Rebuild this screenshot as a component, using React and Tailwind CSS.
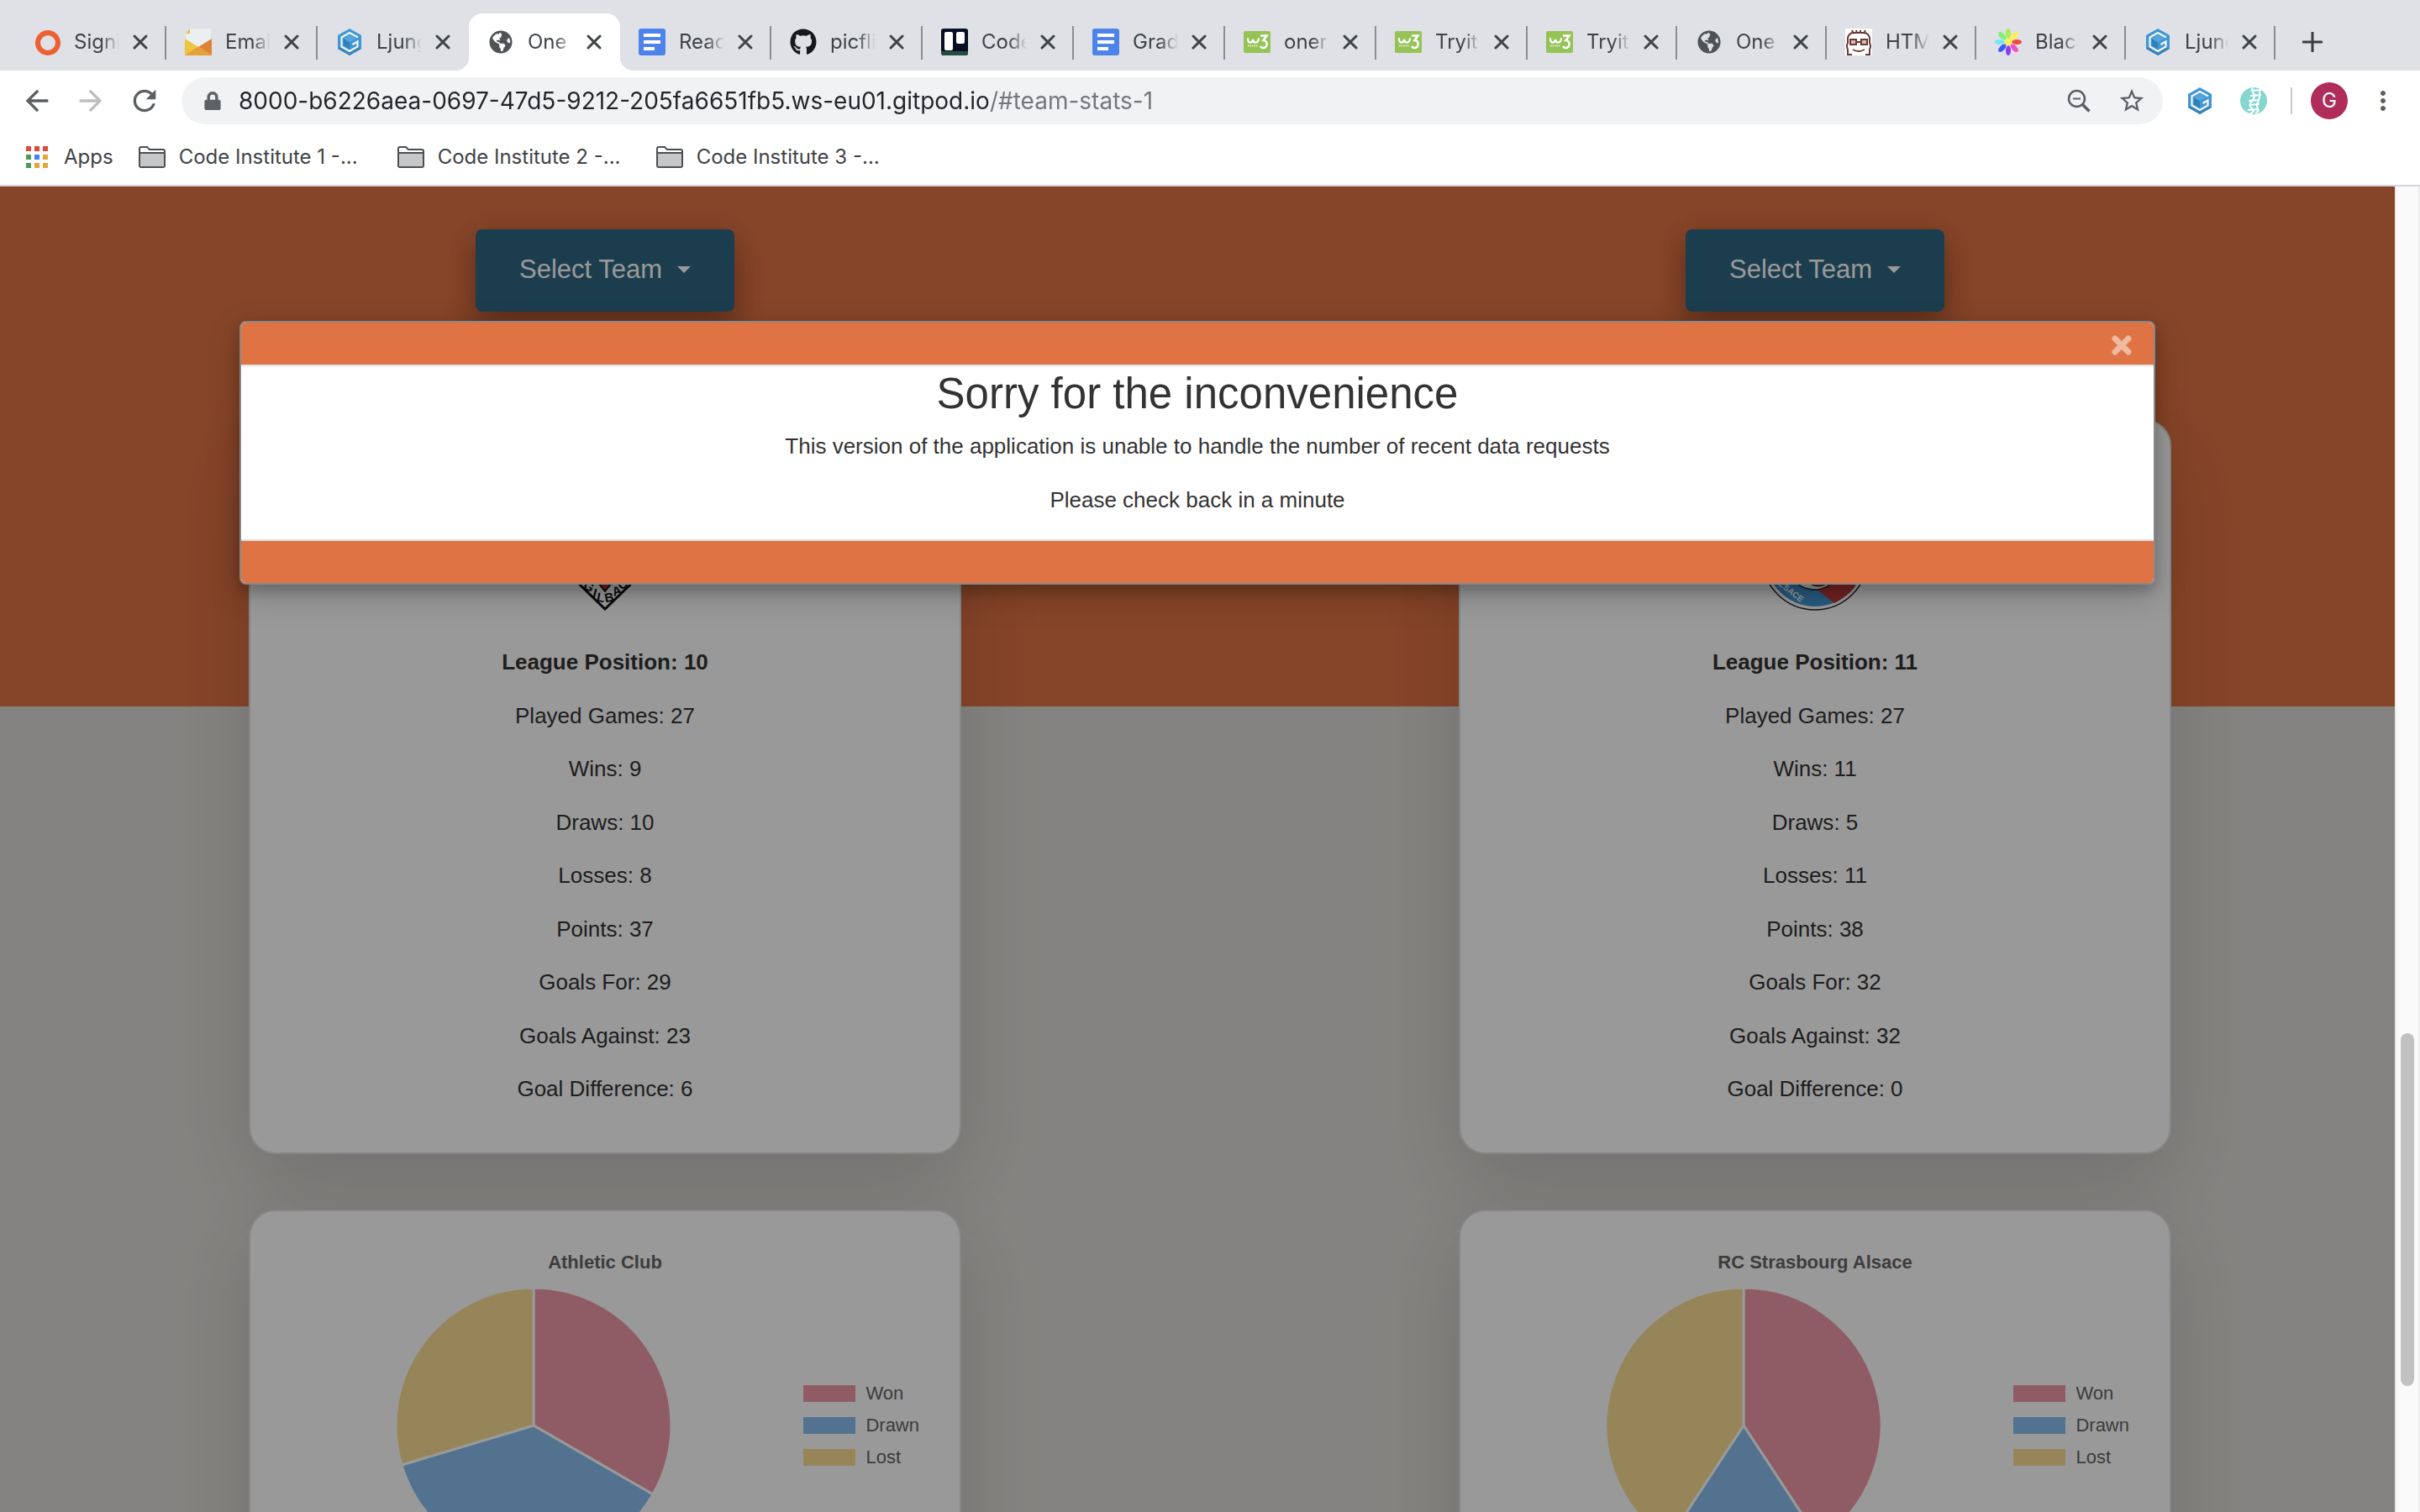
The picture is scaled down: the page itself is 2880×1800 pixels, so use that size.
import React from "react";
import { FaGithub, FaLock, FaGlobeAmericas } from "react-icons/fa";
import { MdArrowBack, MdArrowForward, MdRefresh, MdStarBorder, MdMoreVert } from "react-icons/md";

const UI = "font-['Inter',sans-serif]";
const BODY = "font-['Liberation_Sans',Arial,sans-serif]";

function RingIcon() {
  return (
    <svg viewBox="0 0 32 32" className="size-8">
      <circle cx="17" cy="17" r="12" fill="none" stroke="#ee5f33" strokeWidth="6" />
    </svg>
  );
}

function MailIcon() {
  return (
    <svg viewBox="0 0 32 32" className="size-8">
      <path d="M1 6l6-6h24v30H1z" fill="#ebeff0" />
      <path d="M1 6l5-6v6z" fill="#e8c13a" />
      <path d="M0 12l16 10L0 32z" fill="#ecc63f" />
      <path d="M32 12v20L16 22z" fill="#dd8434" />
      <path d="M0 32l16-11 16 11z" fill="#e8a03c" />
    </svg>
  );
}

function GitpodIcon() {
  return (
    <svg viewBox="0 0 32 32" className="size-8">
      <path d="M16 0l14 8v16l-14 8-14-8V8z" fill="#3f97d3" />
      <path d="M2 24l14 8 14-8-4-3-10 6-10-6z" fill="#3584ba" />
      <path d="M26 10.500L16 5 6.500 10.500v11L16 27l9.500-5.500v-6L19.500 19" fill="none" stroke="#f3f5f8" strokeWidth="2.200" />
      <path d="M16 7.500l8 4-8 4.500-7-4z" fill="#52a7e0" />
      <path d="M9 12.500l7 4v8l-7-4.500z" fill="#3380b5" />
    </svg>
  );
}

function GlobeIcon() {
  return <FaGlobeAmericas className="size-7 mx-0.5 text-[#4f5257]" />;
}

function DocIcon() {
  return (
    <svg viewBox="0 0 32 32" className="size-8">
      <rect width="32" height="32" rx="3" fill="#4f83ec" />
      <path d="M6 6h20v4H6zM6 14h20v4H6zM6 22h13v4H6z" fill="#fff" />
    </svg>
  );
}

function GithubIcon() {
  return <FaGithub className="size-8 text-[#17181c]" />;
}

function BoardIcon() {
  return (
    <svg viewBox="0 0 32 32" className="size-8">
      <rect width="32" height="32" rx="3" fill="#060f24" />
      <path d="M0 27h32v2a3 3 0 0 1-3 3H3a3 3 0 0 1-3-3z" fill="#274c40" />
      <rect x="4" y="4" width="10" height="22" rx="2" fill="#fff" />
      <rect x="18" y="4" width="10" height="14" rx="2" fill="#fff" />
    </svg>
  );
}

function SchoolIcon() {
  return (
    <svg viewBox="0 0 32 32" className="size-8">
      <rect y="3" width="32" height="26" rx="2" fill="#95c356" />
      <path d="M5 12c0 6 5 6 6 1 1 5 6 5 7-1" fill="none" stroke="#fff" strokeWidth="2.200" strokeLinecap="round" />
      <path d="M20 8.500h7.500l-4 5.500c6 0 5 9 0 9-2 0-3-1-3.500-2" fill="none" stroke="#fff" strokeWidth="2.500" />
      <path d="M5 20.500h12" stroke="#e2f0cd" strokeWidth="2" strokeDasharray="1.500 1" />
    </svg>
  );
}

function FaceIcon() {
  return (
    <svg viewBox="0 0 32 32" className="size-8">
      <rect width="32" height="32" fill="#fff" />
      <path d="M8 31H3V25q-2-4 0-8V11q1-5 6-6h14q5 1 6 6v6q2 4 0 8v6h-5" fill="none" stroke="#6b3a35" strokeWidth="2" />
      <path d="M8 2l2 4M13 2l1 4M18 2v4M24 2l-2 4" stroke="#6b3a35" strokeWidth="2" />
      <path d="M6 13h7v6H6zM19 13h7v6h-7z" fill="#d9bcb8" stroke="#6b3a35" strokeWidth="2" />
      <path d="M13 16h6" stroke="#6b3a35" strokeWidth="2" />
      <path d="M9 25q7 4 14 0" fill="none" stroke="#6b3a35" strokeWidth="2" />
    </svg>
  );
}

const PETALS = ["#a8f04a", "#fdf04f", "#ef4a3a", "#f04fc4", "#8a3df0", "#3a5bf5", "#6fe8fa", "#7ff07a"];

function FlowerIcon() {
  return (
    <svg viewBox="0 0 32 32" className="size-8">
      {PETALS.map((c, i) => (
        <path key={c} d="M16 0c2 0 3 3 3 6s-1 5-3 6c-2-1-3-3-3-6s1-6 3-6z" fill={c} transform={`rotate(${i * 45} 16 16)`} />
      ))}
      <circle cx="16" cy="16" r="4" fill="#fdf04f" />
    </svg>
  );
}

function DnaIcon() {
  return (
    <svg viewBox="0 0 32 32" className="size-8">
      <circle cx="16" cy="16" r="16" fill="#86d6d0" />
      <path d="M15 0q-2 4 1 7t-2 9 0 9-3 7M24 2q-1 4-1 8t-2 8 0 7-3 6" fill="none" stroke="#fff" strokeWidth="2" />
      <path d="M13 4l12-1M12 10l13-1M10 16l13-1M11 21l12-1M9 27l13-1" fill="none" stroke="#fff" strokeWidth="2" />
    </svg>
  );
}

function FolderIcon() {
  return (
    <svg viewBox="0 0 32 26" className="w-8 h-[26px] shrink-0">
      <path d="M1 23V3a2 2 0 0 1 2-2h7l3 3h16a2 2 0 0 1 2 2v17a2 2 0 0 1-2 2H3a2 2 0 0 1-2-2z" fill="#fff" stroke="#4c4f52" strokeWidth="2" />
      <path d="M2 8h28v16H2z" fill="#c6c7c8" />
      <path d="M1 8h30" stroke="#4c4f52" strokeWidth="2" />
    </svg>
  );
}

function AppsIcon() {
  const c = ["#df4a3e", "#df4a3e", "#df4a3e", "#4e9a5c", "#3f82f0", "#e3a63c", "#4e9a5c", "#e3a63c", "#e3a63c"];
  return (
    <svg viewBox="0 0 26 26" className="size-[26px] shrink-0">
      {c.map((f, i) => (
        <rect key={i} x={(i % 3) * 10} y={Math.floor(i / 3) * 10} width="6" height="6" fill={f} />
      ))}
    </svg>
  );
}

function ZoomOutIcon() {
  return (
    <svg viewBox="0 0 28 28" className="size-7" fill="none" stroke="currentColor" strokeWidth="2.500">
      <circle cx="11.500" cy="11.500" r="9.500" />
      <path d="M7 11.500h9" strokeWidth="2" />
      <path d="M18 18l8.500 8.500" strokeWidth="3.500" />
    </svg>
  );
}

const TABS = [
  ["Signi", RingIcon],
  ["Emai", MailIcon],
  ["Ljung", GitpodIcon],
  ["One", GlobeIcon, true],
  ["Reac", DocIcon],
  ["picfli", GithubIcon],
  ["Code", BoardIcon],
  ["Grad", DocIcon],
  ["oner", SchoolIcon],
  ["Tryit", SchoolIcon],
  ["Tryit", SchoolIcon],
  ["One", GlobeIcon],
  ["HTM", FaceIcon],
  ["Blacl", FlowerIcon],
  ["Ljung", GitpodIcon],
];

function Tab({ label, Icon, active, narrow, divider }) {
  return (
    <div
      className={`relative flex h-[68px] items-center px-[22px] ${narrow ? "w-[178px]" : "w-[180px]"} ${
        active ? "rounded-t-2xl bg-white" : ""
      }`}
    >
      {active && (
        <>
          <span className="absolute bottom-0 -left-4 size-4 bg-[radial-gradient(circle_at_0_0,transparent_16px,#fff_16px)]" />
          <span className="absolute bottom-0 -right-4 size-4 bg-[radial-gradient(circle_at_100%_0,transparent_16px,#fff_16px)]" />
        </>
      )}
      <button type="button" className="flex items-center gap-4 min-w-0 flex-1 text-left">
        <span className="shrink-0">
          <Icon />
        </span>
        <span className="flex-1 overflow-hidden whitespace-nowrap text-2xl text-[#3f4246] [mask-image:linear-gradient(90deg,#000_60%,transparent)]">
          {label}
        </span>
      </button>
      <button type="button" aria-label="Close tab" className="ml-4 text-[#3f4246]">
        <svg viewBox="0 0 18 18" className="size-[18px]">
          <path d="M2 2l14 14M16 2L2 16" stroke="currentColor" strokeWidth="3" strokeLinecap="round" />
        </svg>
      </button>
      {divider && <span className="absolute right-0 top-[15px] h-10 w-0.5 bg-[#8b8d92]" />}
    </div>
  );
}

function Browser() {
  return (
    <header className={UI}>
      <div className="flex items-end h-[84px] bg-[#dfe1e6] pl-[18px]">
        {TABS.map(([label, Icon, active], i) => (
          <Tab key={i} label={label} Icon={Icon} active={active} narrow={i > 9} divider={i !== 2 && i !== 3} />
        ))}
        <button type="button" aria-label="New tab" className="flex h-[68px] items-center ml-8 text-[#3a3d41]">
          <svg viewBox="0 0 24 24" className="size-6">
            <path d="M12 1v22M1 12h22" stroke="currentColor" strokeWidth="3" strokeLinecap="round" />
          </svg>
        </button>
      </div>

      <div className="flex items-center h-[72px] bg-white pl-6 pr-[26px]">
        <button type="button" aria-label="Back" className="text-[#5b5f64]"><MdArrowBack className="size-10" /></button>
        <button type="button" aria-label="Forward" className="ml-6 text-[#bcbec0]"><MdArrowForward className="size-10" /></button>
        <button type="button" aria-label="Reload" className="ml-6 text-[#5b5f64]"><MdRefresh className="size-10" /></button>
        <div className="flex flex-1 items-center h-14 ml-6 pl-[26px] pr-5 rounded-full bg-[#f1f2f4]">
          <FaLock className="size-[22px] shrink-0 text-[#5f6265]" />
          <input
            type="text"
            aria-label="Address"
            defaultValue="8000-b6226aea-0697-47d5-9212-205fa6651fb5.ws-eu01.gitpod.io/#team-stats-1"
            className="flex-1 ml-5 h-12 text-[28px] text-transparent bg-clip-text bg-[linear-gradient(90deg,#222427_892px,#72757a_892px)] outline-none"
          />
          <button type="button" aria-label="Zoom" className="text-[#5b5f64]"><ZoomOutIcon /></button>
          <button type="button" aria-label="Bookmark" className="ml-8 text-[#5b5f64]"><MdStarBorder className="size-[34px]" /></button>
        </div>
        <button type="button" aria-label="Gitpod" className="ml-7"><GitpodIcon /></button>
        <button type="button" aria-label="Extension" className="ml-8"><DnaIcon /></button>
        <span className="ml-7 h-8 w-0.5 bg-[#c9cbce]" />
        <button type="button" className="ml-[22px] size-11 rounded-full bg-[#b02c5a] text-2xl text-white">G</button>
        <button type="button" aria-label="Menu" className="ml-6 text-[#5b5f64]"><MdMoreVert className="size-9" /></button>
      </div>

      <nav className="flex items-center h-[66px] bg-white border-b-2 border-[#d3d6dc] pl-[31px] pb-0.5 text-2xl text-[#3f4246]">
        <a href="#apps" className="flex items-center gap-[19px]"><AppsIcon />Apps</a>
        {[1, 2, 3].map((n) => (
          <a key={n} href={`#folder-${n}`} className="flex items-center gap-4 ml-[30px] w-[278px] whitespace-nowrap">
            <FolderIcon />
            Code Institute {n} -...
          </a>
        ))}
      </nav>
    </header>
  );
}

const CREST_LETTERS = [
  ["G", 37, 99, 30],
  ["I", 44, 107, 14],
  ["L", 51, 112, 10],
  ["B", 61, 112, -10],
  ["A", 70, 104, -18],
  ["O", 77, 96, -30],
];

function AthleticCrest() {
  return (
    <svg viewBox="0 0 112 128" className="h-32 w-28">
      <path d="M4 2h104v40q0 24-22 55L56 126 26 97Q4 66 4 42z" fill="#fff" stroke="#111" strokeWidth="3" />
      <path d="M56 105L44 90V20h24v70z" fill="#c22d2d" stroke="#111" strokeWidth="2" />
      {CREST_LETTERS.map(([c, x, y, r]) => (
        <text
          key={c}
          x={x}
          y={y}
          transform={`rotate(${r} ${x} ${y})`}
          textAnchor="middle"
          dominantBaseline="central"
          fontSize="15"
          fontWeight="700"
          fill="#111"
        >
          {c}
        </text>
      ))}
    </svg>
  );
}

function StrasbourgCrest() {
  return (
    <svg viewBox="0 0 128 128" className="size-32">
      <circle cx="64" cy="64" r="63" fill="#fff" stroke="#222" strokeWidth="1.500" />
      <circle cx="64" cy="64" r="59" fill="#4197d6" />
      <path d="M60 98l27 21q16-8 25-20L98 84z" fill="#c23a3a" />
      <path d="M38 88q6 15 28 15 16-2 20-13z" fill="#fff" stroke="#222" strokeWidth="1.500" />
      <path d="M54 90q4 9 14 9t14-9z" fill="#c23a3a" stroke="#222" strokeWidth="1" />
      <text x="33" y="103" transform="rotate(38 33 103)" textAnchor="middle" dominantBaseline="central" fontSize="10" fontWeight="700" fill="#fff">
        ALSACE
      </text>
    </svg>
  );
}

const SLICES = [
  ["Won", "#ef99aa", "bg-[#ef99aa]"],
  ["Drawn", "#89beef", "bg-[#89beef]"],
  ["Lost", "#f9de95", "bg-[#f9de95]"],
];

function Pie({ values }) {
  const total = values.reduce((a, b) => a + b, 0);
  let at = 0;
  const point = (v) => {
    const t = (v / total) * 2 * Math.PI;
    return `${164 + 164 * Math.sin(t)} ${164 - 164 * Math.cos(t)}`;
  };
  return (
    <svg viewBox="0 0 328 328" className="size-[328px]" role="img" aria-label="Results">
      {values.map((v, i) => {
        const from = at;
        at += v;
        return (
          <path
            key={i}
            d={`M164 164L${point(from)}A164 164 0 ${v / total > 0.5 ? 1 : 0} 1 ${point(at)}Z`}
            fill={SLICES[i][1]}
            stroke="#fff"
            strokeWidth="3"
            strokeLinejoin="round"
          />
        );
      })}
    </svg>
  );
}

const TEAMS = [
  { name: "Athletic Club", Crest: AthleticCrest, position: 10, stats: [27, 9, 10, 8, 37, 29, 23, 6] },
  { name: "RC Strasbourg Alsace", Crest: StrasbourgCrest, position: 11, stats: [27, 11, 5, 11, 38, 32, 32, 0] },
];

const LABELS = ["Played Games", "Wins", "Draws", "Losses", "Points", "Goals For", "Goals Against", "Goal Difference"];

const CARD = "w-[848px] rounded-[32px] border-2 border-[#dfdfdf] bg-white shadow-[0_32px_96px_rgba(0,0,0,0.14)]";

function Team({ name, Crest, position, stats }) {
  return (
    <section className="flex flex-col items-center pt-[51px]">
      <button
        type="button"
        className="flex items-center h-[98px] px-[52px] pb-0.5 rounded-lg bg-[#306683] text-[31px] text-white shadow-[0_16px_32px_rgba(0,0,0,0.2),0_12px_40px_rgba(0,0,0,0.19)]"
      >
        Select Team
        <span className="ml-[18px] border-x-8 border-t-8 border-x-transparent border-t-white" />
      </button>
      <div className={`${CARD} mt-32 pt-[98px] pb-[57px] flex flex-col items-center text-[26px] text-[#333]`}>
        <Crest />
        <ul className="flex flex-col justify-between h-[546px] mt-[42px] text-center leading-[38px]">
          <li className="font-bold">League Position: {position}</li>
          {LABELS.map((l, i) => (
            <li key={l}>{l}: {stats[i]}</li>
          ))}
        </ul>
      </div>
      <div className={`${CARD} mt-[66px] px-12 pt-[45px] pb-12 text-[22px] text-[#666]`}>
        <h3 className="text-center font-bold leading-8">{name}</h3>
        <div className="flex items-center gap-8 mt-3.5">
          <div className="flex flex-1 justify-center">
            <Pie values={stats.slice(1, 4)} />
          </div>
          <ul className="flex flex-col gap-[14px]">
            {SLICES.map(([l, , bg]) => (
              <li key={l} className="flex items-center gap-3 leading-6">
                <span className={`h-5 w-[62px] ${bg}`} />
                {l}
              </li>
            ))}
          </ul>
        </div>
      </div>
    </section>
  );
}

function Modal() {
  return (
    <div className="absolute inset-y-0 left-0 right-[30px] flex items-start justify-center bg-black/40 pt-40">
      <div
        role="dialog"
        aria-modal="true"
        aria-labelledby="notice-title"
        className="w-4/5 overflow-hidden rounded-lg border-2 border-[#888] bg-white text-center text-[#333] shadow-[0_8px_16px_rgba(0,0,0,0.2),0_12px_40px_rgba(0,0,0,0.19)]"
      >
        <div className="flex h-[52px] items-center justify-end border-b-2 border-[#dee2e6] bg-[#e07344] pr-[25px]">
          <button type="button" aria-label="Close" className="pt-1">
            <svg viewBox="0 0 26 26" className="size-[26px]">
              <path d="M5 5l16 16M21 5L5 21" stroke="#f0b9a2" strokeWidth="7" strokeLinecap="round" />
            </svg>
          </button>
        </div>
        <div className="pt-[3px] pb-5 text-[26px] leading-[38px]">
          <h2 id="notice-title" className="text-[51px] leading-[60px]">Sorry for the inconvenience</h2>
          <p className="mt-[13px]">This version of the application is unable to handle the number of recent data requests</p>
          <p className="mt-[26px] mb-2">Please check back in a minute</p>
        </div>
        <div className="h-[52px] border-t-2 border-[#dee2e6] bg-[#e07344]" />
      </div>
    </div>
  );
}

export default function App() {
  return (
    <div className="flex h-screen flex-col overflow-hidden">
      <Browser />
      <main className={`relative min-h-0 flex-1 overflow-hidden ${BODY}`}>
        <div className="grid grid-cols-2 bg-[linear-gradient(#e07344_619px,#dedbd7_619px)]">
          {TEAMS.map((t) => (
            <Team key={t.name} {...t} />
          ))}
        </div>
        <Modal />
        <div className="absolute inset-y-0 right-0 flex w-[30px] justify-center border-x-2 border-[#ebebeb] bg-[#fafafa] pt-[1008px]">
          <div className="h-[420px] w-4 rounded-full bg-[#c1c1c1]" />
        </div>
      </main>
    </div>
  );
}
